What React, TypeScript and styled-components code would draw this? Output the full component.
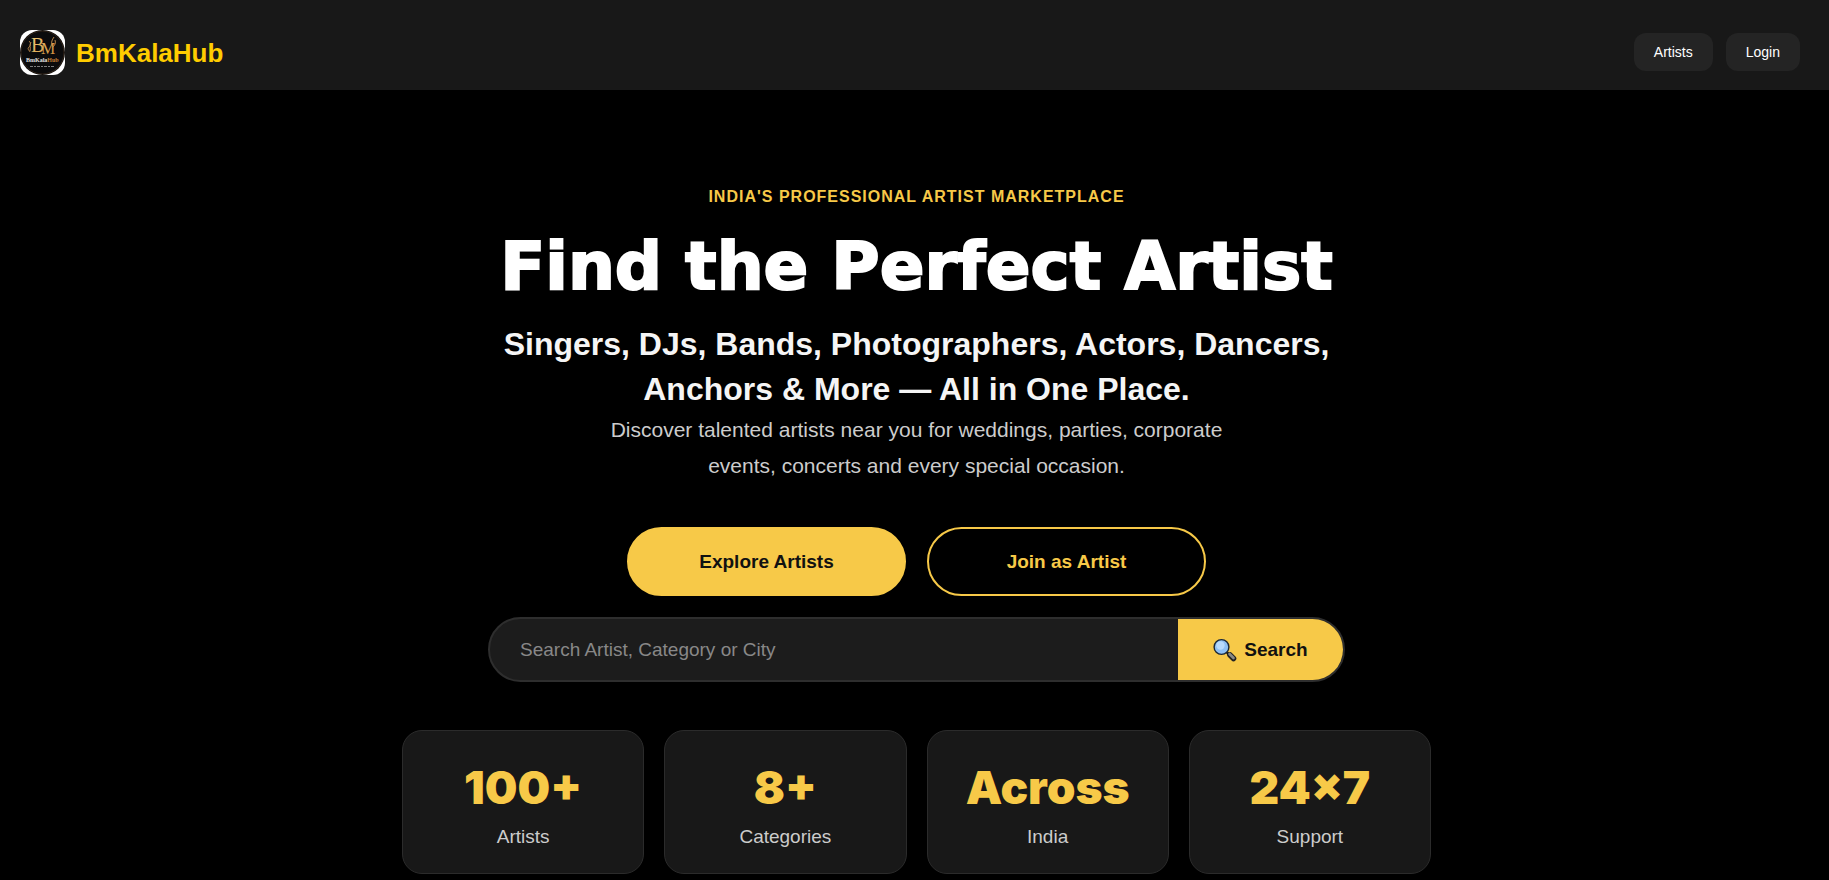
import React from "react";
import styled, { createGlobalStyle, css } from "styled-components";

const gold = "#f7c948";

const GlobalStyle = createGlobalStyle`
  *, *::before, *::after { box-sizing: border-box; }
  body {
    margin: 0;
    background: #000;
    color: #fff;
    font-family: Arial, "Liberation Sans", sans-serif;
  }
  h1, h2, p, dl, dd { margin: 0; }
  a { color: inherit; text-decoration: none; }
  button, input { font-family: inherit; }
`;

const Header = styled.header`
  display: flex;
  align-items: flex-start;
  justify-content: space-between;
  padding: 30px 29px 15px 20px;
  background: #181818;
`;

const Brand = styled.a`
  display: flex;
  align-items: center;
  gap: 11px;
  color: #ffcc00;
  font-size: 26px;
  line-height: 28px;
  font-weight: 700;
`;

const Nav = styled.nav`
  display: flex;
  gap: 13px;
  margin-top: 3px;
`;

const NavLink = styled.a`
  padding: 9px 20px;
  border-radius: 12px;
  background: #242424;
  font-size: 14px;
  line-height: 20px;
`;

const Hero = styled.main`
  display: flex;
  flex-direction: column;
  align-items: center;
  padding: 95px 20px 4px 24px;
  text-align: center;
`;

const Eyebrow = styled.p`
  color: ${gold};
  font-size: 16px;
  line-height: 24px;
  font-weight: 700;
  letter-spacing: 1px;
  text-transform: uppercase;
`;

const Title = styled.h1`
  margin-top: 20px;
  font-family: "Arial Black", "DejaVu Sans", sans-serif;
  font-size: 66px;
  line-height: 76px;
  font-weight: 900;
  -webkit-text-stroke: 2px currentColor;
`;

const Subtitle = styled.h2`
  max-width: 900px;
  margin-top: 17px;
  color: #f5f5f5;
  font-size: 32px;
  line-height: 45px;
  font-weight: 700;
`;

const Description = styled.p`
  max-width: 700px;
  color: #cccccc;
  font-size: 21px;
  line-height: 36px;
`;

const Actions = styled.div`
  display: flex;
  flex-wrap: wrap;
  justify-content: center;
  gap: 21px;
  margin-top: 43px;
`;

const ActionButton = styled.button<{ $outline?: boolean }>`
  width: 279px;
  height: 69px;
  border: 2px solid ${gold};
  border-radius: 35px;
  background: ${gold};
  color: #111;
  font-size: 19px;
  font-weight: 700;
  cursor: pointer;
  ${(p) =>
    p.$outline &&
    css`
      background: transparent;
      color: ${gold};
    `}
`;

const SearchForm = styled.form`
  display: flex;
  width: 100%;
  max-width: 857px;
  height: 65px;
  margin-top: 21px;
  overflow: hidden;
  border: 2px solid #2e2e2e;
  border-radius: 33px;
  background: #1c1c1c;
`;

const SearchInput = styled.input`
  flex: 1;
  min-width: 0;
  padding: 0 30px;
  border: 0;
  outline: 0;
  background: transparent;
  color: #fff;
  font-size: 19px;
  &::placeholder { color: #888; opacity: 1; }
`;

const SearchButton = styled.button`
  display: flex;
  align-items: center;
  justify-content: center;
  gap: 7px;
  width: 165px;
  padding: 0;
  border: 0;
  background: ${gold};
  color: #111;
  font-size: 19px;
  font-weight: 700;
  cursor: pointer;
`;

const Stats = styled.dl`
  display: grid;
  grid-template-columns: repeat(4, 1fr);
  gap: 20px;
  width: 100%;
  max-width: 1029px;
  margin-top: 48px;
`;

const StatCard = styled.div`
  display: flex;
  flex-direction: column-reverse;
  gap: 10px;
  padding: 30px 10px 22px;
  border: 1px solid #2b2b2b;
  border-radius: 20px;
  background: #181818;
`;

const StatValue = styled.dd`
  color: ${gold};
  font-family: "Arial Black", Inter, sans-serif;
  font-size: 46px;
  line-height: 52px;
  font-weight: 900;
`;

const StatLabel = styled.dt`
  color: #cccccc;
  font-size: 19px;
  line-height: 28px;
`;

const Logo = () => (
  <svg width="45" height="45" viewBox="0 0 45 45" aria-hidden="true">
    <defs>
      <clipPath id="logo-clip">
        <rect width="45" height="45" rx="12" />
      </clipPath>
      <linearGradient id="logo-gold" x1="0" y1="0" x2="1" y2="1">
        <stop offset="0" stopColor="#f3cf7a" />
        <stop offset="1" stopColor="#c98a3a" />
      </linearGradient>
    </defs>
    <g clipPath="url(#logo-clip)">
      <rect width="45" height="45" fill="#fff" />
      <circle cx="22.500" cy="22.500" r="22.500" fill="#0b0b0c" />
      <circle cx="22.500" cy="22.500" r="21.500" fill="none" stroke="#4a3420" strokeWidth="0.600" />
      <text x="11" y="22" fontFamily="Liberation Serif, serif" fontWeight="400" fontSize="20" fill="url(#logo-gold)">
        B<tspan x="21" dy="2" fontSize="16">M</tspan>
      </text>
      <path d="M9 11c2 2 2 4 0 6s0 3 1 5M11 12c-2 3 0 6-1 9" fill="none" stroke="#b9854a" strokeWidth="1" />
      <path d="M34 7c-2 3-3 5-2 8M35 10c1 3 0 5-2 7" fill="none" stroke="#b9854a" strokeWidth="1" />
      <text x="6" y="32" fontFamily="Liberation Serif, serif" fontWeight="700" fontSize="6" fill="#e4e4e4">
        BmKala<tspan fill="#c47f35">Hub</tspan>
      </text>
      <path d="M10 36.500h25" stroke="#999" strokeWidth="0.800" strokeDasharray="3 1 2 1" />
    </g>
  </svg>
);

const SearchIcon = () => (
  <svg width="24" height="24" viewBox="0 0 24 24" aria-hidden="true">
    <path d="M14 14.500l2 2" stroke="#111" strokeWidth="2.500" />
    <path d="M17 17l3.500 3.500" stroke="#222" strokeWidth="5.500" strokeLinecap="round" />
    <path d="M16.500 16l4 4" stroke="#8a8a86" strokeWidth="2.600" strokeLinecap="round" />
    <circle cx="8.500" cy="9" r="7.400" fill="#8fc0f2" stroke="#1b2733" strokeWidth="1.400" />
    <circle cx="7.500" cy="7.500" r="4.200" fill="#b8dafa" />
  </svg>
);

const stats = [
  { value: "100+", label: "Artists" },
  { value: "8+", label: "Categories" },
  { value: "Across", label: "India" },
  { value: "24×7", label: "Support" },
];

export default function App() {
  return (
    <>
      <GlobalStyle />
      <Header>
        <Brand href="#">
          <Logo />
          BmKalaHub
        </Brand>
        <Nav>
          <NavLink href="#artists">Artists</NavLink>
          <NavLink href="#login">Login</NavLink>
        </Nav>
      </Header>
      <Hero>
        <Eyebrow>India's Professional Artist Marketplace</Eyebrow>
        <Title>Find the Perfect Artist</Title>
        <Subtitle>
          Singers, DJs, Bands, Photographers, Actors, Dancers,
          <br />
          Anchors &amp; More — All in One Place.
        </Subtitle>
        <Description>
          Discover talented artists near you for weddings, parties, corporate
          <br />
          events, concerts and every special occasion.
        </Description>
        <Actions>
          <ActionButton type="button">Explore Artists</ActionButton>
          <ActionButton type="button" $outline>
            Join as Artist
          </ActionButton>
        </Actions>
        <SearchForm role="search" onSubmit={(e) => e.preventDefault()}>
          <SearchInput
            type="text"
            aria-label="Search Artist, Category or City"
            placeholder="Search Artist, Category or City"
          />
          <SearchButton type="submit">
            <SearchIcon />
            Search
          </SearchButton>
        </SearchForm>
        <Stats>
          {stats.map((s) => (
            <StatCard key={s.label}>
              <StatLabel>{s.label}</StatLabel>
              <StatValue>{s.value}</StatValue>
            </StatCard>
          ))}
        </Stats>
      </Hero>
    </>
  );
}
